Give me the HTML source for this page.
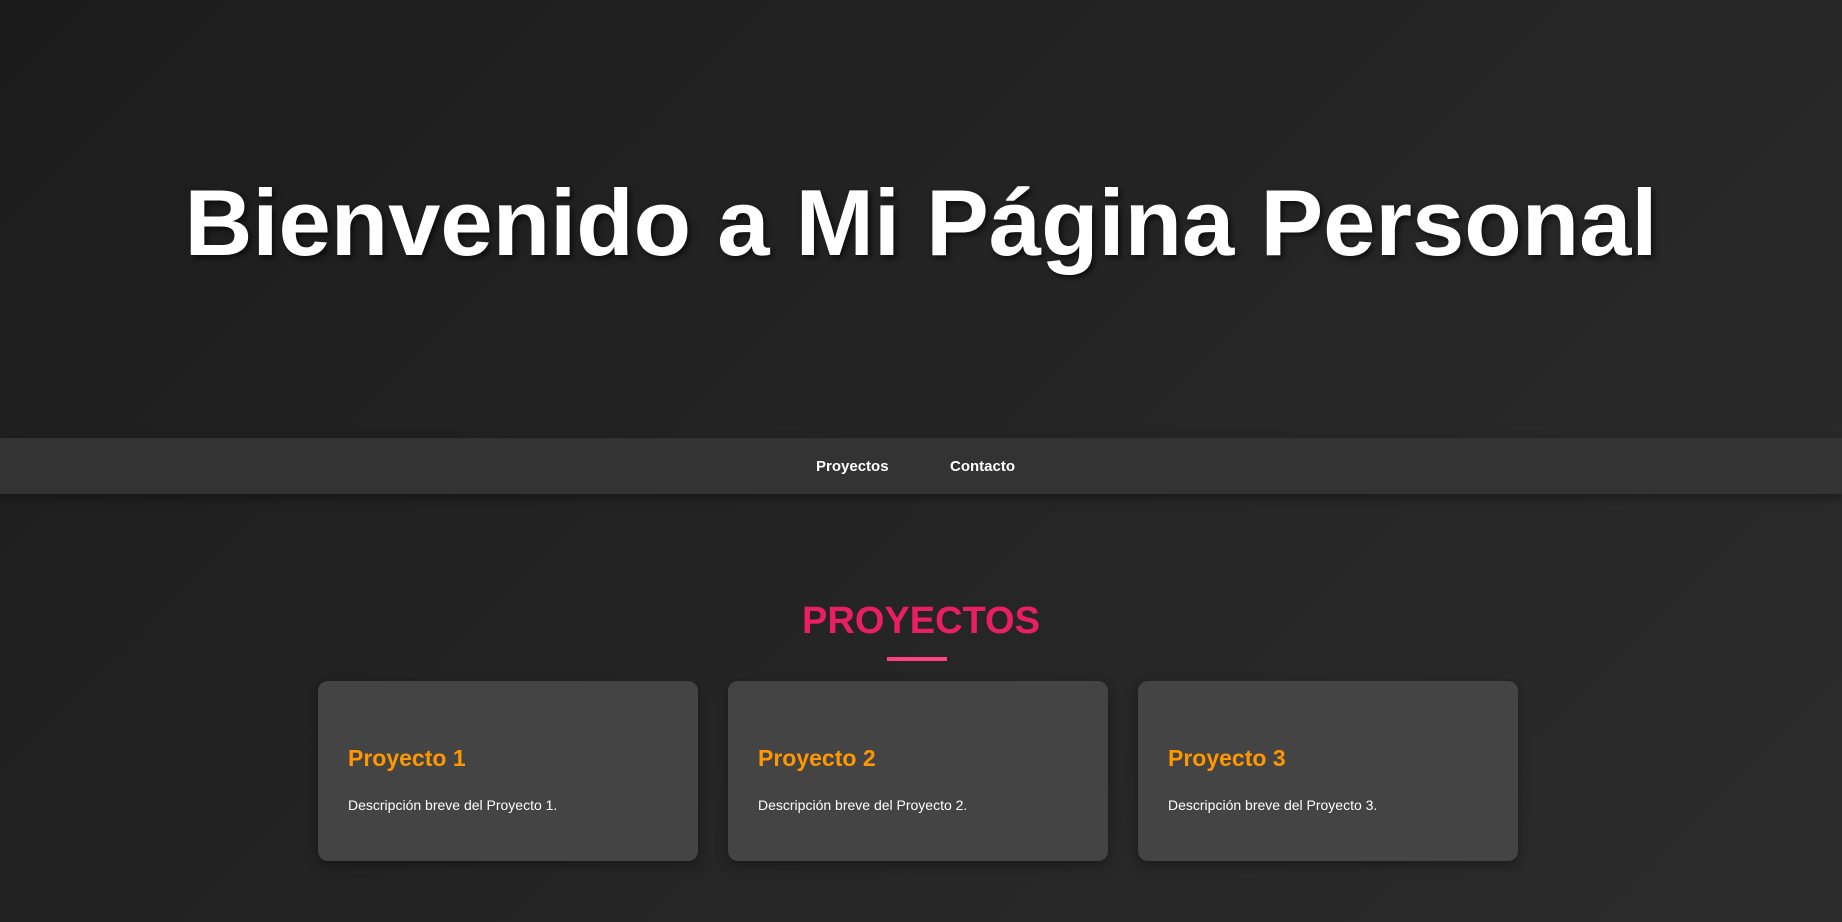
<!DOCTYPE html>
<html><head><meta charset="utf-8"><style>
*{margin:0;padding:0;box-sizing:border-box}
html,body{width:1842px;height:922px;overflow:hidden}
body{background:linear-gradient(135deg,#1c1c1c 0%,#262626 60%,#2c2c2c 100%);font-family:"Liberation Sans",sans-serif;position:relative;color:#fff}
.h1{position:absolute;left:0;width:1842px;top:168px;text-align:center;font-size:94px;font-weight:bold;line-height:110px;color:#fff;text-shadow:3px 3px 6px rgba(0,0,0,.6)}
nav{position:absolute;top:438px;left:0;width:1842px;height:56px;background:#333;box-shadow:0 4px 10px rgba(0,0,0,.35)}
nav a{position:absolute;top:20px;font-size:15px;font-weight:bold;color:#fff;text-decoration:none;line-height:18px}
.h2{position:absolute;top:599px;left:0;width:1842px;text-align:center;font-size:38px;font-weight:bold;color:#e91e63;line-height:45px}
.ul{position:absolute;left:887px;top:657px;width:60px;height:4px;background:#ff4081}
.card{position:absolute;top:681px;width:380px;height:180px;background:#444;border-radius:10px;box-shadow:0 4px 12px rgba(0,0,0,.35)}
.card h3{position:absolute;left:30px;top:62px;font-size:23px;color:#ff9800;line-height:30px}
.card p{position:absolute;left:30px;top:114px;font-size:14px;line-height:20px;color:#fff}
</style></head><body>
<div class="h1">Bienvenido a Mi Página Personal</div>
<nav><a style="left:816px">Proyectos</a><a style="left:950px">Contacto</a></nav>
<div class="h2">PROYECTOS</div>
<div class="ul"></div>
<div class="card" style="left:318px"><h3>Proyecto 1</h3><p>Descripción breve del Proyecto 1.</p></div>
<div class="card" style="left:728px"><h3>Proyecto 2</h3><p>Descripción breve del Proyecto 2.</p></div>
<div class="card" style="left:1138px"><h3>Proyecto 3</h3><p>Descripción breve del Proyecto 3.</p></div>
</body></html>
